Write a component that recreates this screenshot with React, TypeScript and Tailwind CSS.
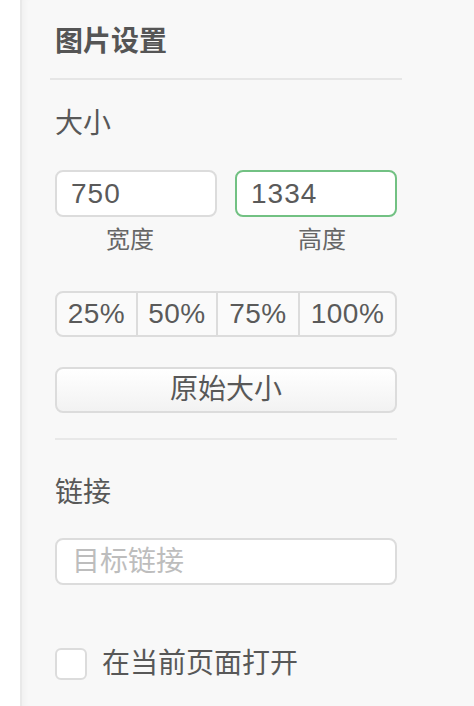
import { ReactElement } from 'react'

const font = { fontFamily: '"Liberation Sans", "Noto Sans CJK SC", sans-serif' }

const ImageSettings = (): ReactElement => {
	const renderTitle = (
		<>
			<h2 className="mt-[28px] h-[28px] leading-[28px] text-[28px] font-bold text-[#555]">
				图片设置
			</h2>
			<div className="-mx-[5px] mt-[22px] h-[2px] bg-[#e6e6e6]" />
		</>
	)

	const renderSize = (
		<>
			<p className="mt-[30px] h-[28px] leading-[28px] text-[28px] text-[#585858]">大小</p>

			<div className="mt-[32px] flex gap-[18px]">
				<input
					defaultValue="750"
					className="h-[47px] w-[162px] rounded-[8px] border-2 border-[#dcdcdc] bg-white pl-[14px] text-[28px] tracking-[1px] text-[#5a5a5a] outline-none"
				/>
				<input
					defaultValue="1334"
					className="h-[47px] w-[162px] rounded-[8px] border-2 border-[#72c183] bg-white pl-[14px] text-[28px] tracking-[1px] text-[#5a5a5a] outline-none"
				/>
			</div>

			<div className="mt-[11px] flex gap-[18px] text-[24px] leading-[24px] text-[#666]">
				<span className="w-[162px] pr-[12px] text-center">宽度</span>
				<span className="w-[162px] pl-[12px] text-center">高度</span>
			</div>

			<div className="mt-[39px] flex h-[46px] overflow-hidden rounded-[8px] border-2 border-[#dcdcdc] bg-[#fafafa] text-[28px] tracking-[0.5px] text-[#5a5a5a]">
				<button className="w-[81px] border-r-2 border-[#dcdcdc]">25%</button>
				<button className="w-[80px] border-r-2 border-[#dcdcdc]">50%</button>
				<button className="w-[82px] border-r-2 border-[#dcdcdc]">75%</button>
				<button className="flex-1">100%</button>
			</div>

			<button className="mt-[30px] h-[46px] w-full rounded-[8px] border-2 border-[#dcdcdc] bg-gradient-to-b from-white to-[#f2f2f2] text-[28px] text-[#585858]">
				原始大小
			</button>

			<div className="mt-[25px] h-[2px] bg-[#e8e8e8]" />
		</>
	)

	const renderLink = (
		<>
			<p className="mt-[39px] h-[28px] leading-[28px] text-[28px] text-[#585858]">链接</p>

			<input
				placeholder="目标链接"
				className="mt-[31px] h-[47px] w-full rounded-[8px] border-2 border-[#dcdcdc] bg-white pl-[15px] text-[28px] text-[#555] outline-none placeholder:text-[#bdbdbd]"
			/>

			<label className="mt-[63px] flex h-[32px] items-center gap-[15px]">
				<span className="h-[32px] w-[32px] rounded-[6px] border-2 border-[#dcdcdc] bg-white" />
				<span className="text-[28px] leading-[28px] text-[#585858]">在当前页面打开</span>
			</label>
		</>
	)

	return (
		<div className="flex h-[706px] w-[474px] overflow-hidden bg-white" style={font}>
			<div className="w-[20px] shrink-0 bg-white" />
			<div className="flex-1 border-l-2 border-[#e9e9e9] bg-[#f8f8f8] shadow-[inset_6px_0_6px_-4px_rgba(0,0,0,0.04)]">
				<div className="ml-[33px] flex w-[342px] flex-col">
					{renderTitle}
					{renderSize}
					{renderLink}
				</div>
			</div>
		</div>
	)
}

export default function App(): ReactElement {
	return <ImageSettings />
}
